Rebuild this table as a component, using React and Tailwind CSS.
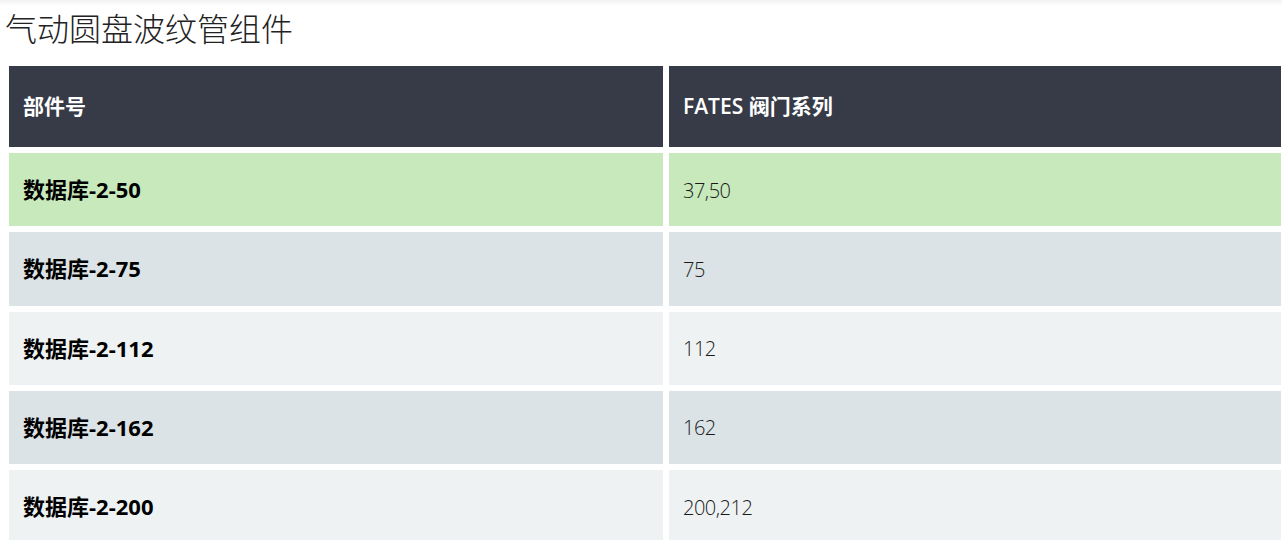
const rows = [
  { part: '数据库-2-50', series: '37,50', bg: 'bg-[#c7e9bc]' },
  { part: '数据库-2-75', series: '75', bg: 'bg-[#dbe3e6]' },
  { part: '数据库-2-112', series: '112', bg: 'bg-[#eef2f3]' },
  { part: '数据库-2-162', series: '162', bg: 'bg-[#dbe3e6]' },
  { part: '数据库-2-200', series: '200,212', bg: 'bg-[#eef2f3]' },
];

export default function App() {
  return (
    <div className="w-[1282px] h-[540px] overflow-hidden bg-white font-['Open_Sans','Noto_Sans_CJK_SC',sans-serif]">
      <div className="h-[6px] bg-gradient-to-b from-[#f2f2f2] to-white" />
      <h1 className="pl-[5px] text-[32px] leading-[46px] font-light text-[#222] font-['Noto_Sans_CJK_SC',sans-serif] -mt-[2px]">
        气动圆盘波纹管组件
      </h1>

      <div className="mt-[16px] pl-[9px] grid grid-cols-[654px_612px] grid-rows-[81px_repeat(5,73.25px)] gap-[6px] w-max">
        <div className="bg-[#373a47] text-white font-semibold text-[21px] flex items-center pl-[14px]">
          部件号
        </div>
        <div className="bg-[#373a47] text-white font-semibold text-[21px] flex items-center pl-[14px]">
          FATES 阀门系列
        </div>

        {rows.map((row) => (
          <div key={row.part} className="contents">
            <div className={`${row.bg} flex items-center pl-[14px] text-[22px] font-bold text-black`}>
              {row.part}
            </div>
            <div className={`${row.bg} flex items-center pl-[14px] pt-[2px] text-[20px] font-light text-[#1a1a1a] tracking-[-0.5px]`}>
              {row.series}
            </div>
          </div>
        ))}
      </div>
    </div>
  );
}
